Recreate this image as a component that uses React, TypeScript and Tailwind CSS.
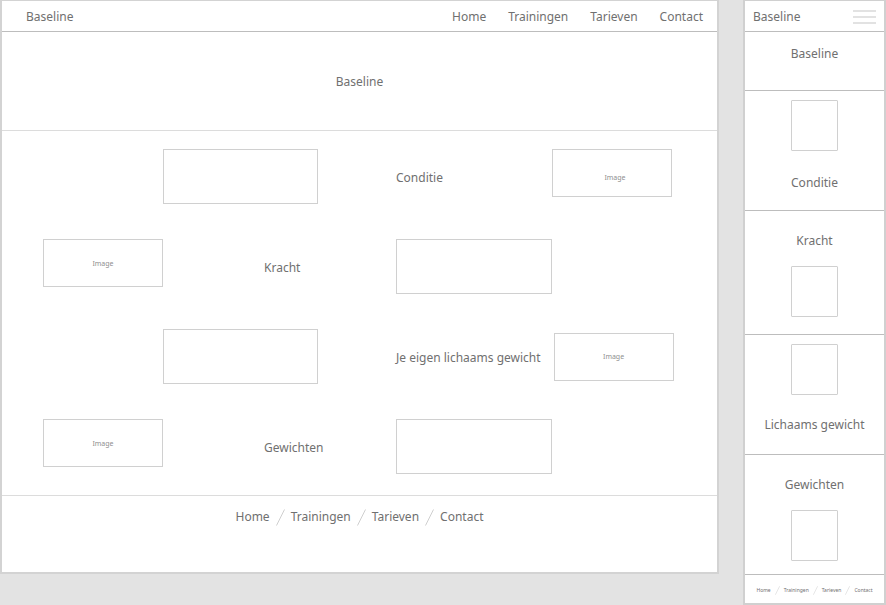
import { Fragment } from "react";

const links = ["Home", "Trainingen", "Tarieven", "Contact"];

function Slash({ className }: { className: string }) {
  return (
    <svg viewBox="0 0 9 17" className={className} fill="none" stroke="#cfcfcf" aria-hidden="true">
      <path d="M8.5 0.5 0.5 16.5" />
    </svg>
  );
}

function ImageBox({ className = "" }: { className?: string }) {
  return (
    <div
      className={`flex h-12 items-center justify-center border border-[#d0d0d0] text-[7px] leading-none text-[#8f8f8f] ${className}`}
    >
      Image
    </div>
  );
}

function Box({ className }: { className: string }) {
  return <div className={`h-[55px] border border-[#d0d0d0] ${className}`} />;
}

const row =
  "grid h-[54px] grid-cols-[41fr_120fr_101fr_54fr_78fr_156fr_120fr_45fr] items-start";

function Desktop() {
  return (
    <div className="min-w-0 flex-1 border-2 border-t border-[#d3d3d3] bg-white">
      <header className="flex h-[31px] items-center justify-between border-b border-[#bdbdbd] pt-0.5 pr-[14px] pl-6">
        <span>Baseline</span>
        <nav className="flex gap-[22px]">
          {links.map((l) => (
            <a key={l} href="#">
              {l}
            </a>
          ))}
        </nav>
      </header>
      <section className="flex h-[99px] items-center justify-center border-b border-[#dcdcdc] pt-0.5">
        <h1>Baseline</h1>
      </section>
      <main className="flex flex-col gap-9 border-b border-[#dcdcdc] pt-[18px] pb-[22px]">
        <section className={row}>
          <Box className="col-span-2 col-start-3" />
          <h2 className="col-start-6 self-center pt-0.5">Conditie</h2>
          <ImageBox className="col-start-7 pt-2 pl-1.5" />
        </section>
        <section className={row}>
          <ImageBox className="col-start-2" />
          <h2 className="col-span-2 col-start-4 self-center pt-0.5">Kracht</h2>
          <Box className="col-start-6" />
        </section>
        <section className={row}>
          <Box className="col-span-2 col-start-3" />
          <div className="col-span-3 col-start-6 flex items-center gap-[13px] self-center">
            <h2 className="pt-0.5 whitespace-nowrap">Je eigen lichaams gewicht</h2>
            <ImageBox className="w-[120px]" />
          </div>
        </section>
        <section className={row}>
          <ImageBox className="col-start-2" />
          <h2 className="col-span-2 col-start-4 self-center pt-0.5">Gewichten</h2>
          <Box className="col-start-6" />
        </section>
      </main>
      <footer className="h-[76px] pt-3">
        <nav className="flex items-center justify-center gap-1.5">
          {links.map((l, i) => (
            <Fragment key={l}>
              {i > 0 && <Slash className="h-[17px] w-[9px]" />}
              <a href="#">{l}</a>
            </Fragment>
          ))}
        </nav>
      </footer>
    </div>
  );
}

function Tile() {
  return <div className="h-[51px] w-[47px] rounded-[1px] border border-[#d0d0d0]" />;
}

const panel = "flex flex-col items-center border-b border-[#bdbdbd]";

function Mobile() {
  return (
    <div className="w-[143px] shrink-0 border-2 border-t border-[#d0d0d0] bg-white">
      <header className="flex h-[31px] items-center justify-between border-b border-[#bdbdbd] px-2 pt-0.5">
        <span>Baseline</span>
        <button type="button" aria-label="Menu" className="flex w-[23px] flex-col gap-1">
          <span className="h-0.5 bg-[#e2e2e2]" />
          <span className="h-0.5 bg-[#e2e2e2]" />
          <span className="h-0.5 bg-[#e2e2e2]" />
        </button>
      </header>
      <section className={`${panel} h-[59px] pt-[13px]`}>
        <h1>Baseline</h1>
      </section>
      <section className={`${panel} h-[120px] justify-between pt-[9px] pb-[18px]`}>
        <Tile />
        <h2>Conditie</h2>
      </section>
      <section className={`${panel} h-[124px] justify-between pt-[21px] pb-[17px]`}>
        <h2>Kracht</h2>
        <Tile />
      </section>
      <section className={`${panel} h-[120px] justify-between pt-[9px] pb-5`}>
        <Tile />
        <h2>Lichaams gewicht</h2>
      </section>
      <section className={`${panel} h-[120px] justify-between pt-[21px] pb-[13px]`}>
        <h2>Gewichten</h2>
        <Tile />
      </section>
      <footer className="flex h-7 items-center justify-center pt-0.5">
        <nav className="flex items-center gap-1 text-[5px] leading-none">
          {links.map((l, i) => (
            <Fragment key={l}>
              {i > 0 && <Slash className="h-[9px] w-[5px]" />}
              <a href="#">{l}</a>
            </Fragment>
          ))}
        </nav>
      </footer>
    </div>
  );
}

export default function App() {
  return (
    <div className="flex min-h-screen items-start gap-6 bg-[#e3e3e3] font-['Noto_Sans',sans-serif] text-xs leading-[18px] text-[#707070]">
      <Desktop />
      <Mobile />
    </div>
  );
}
